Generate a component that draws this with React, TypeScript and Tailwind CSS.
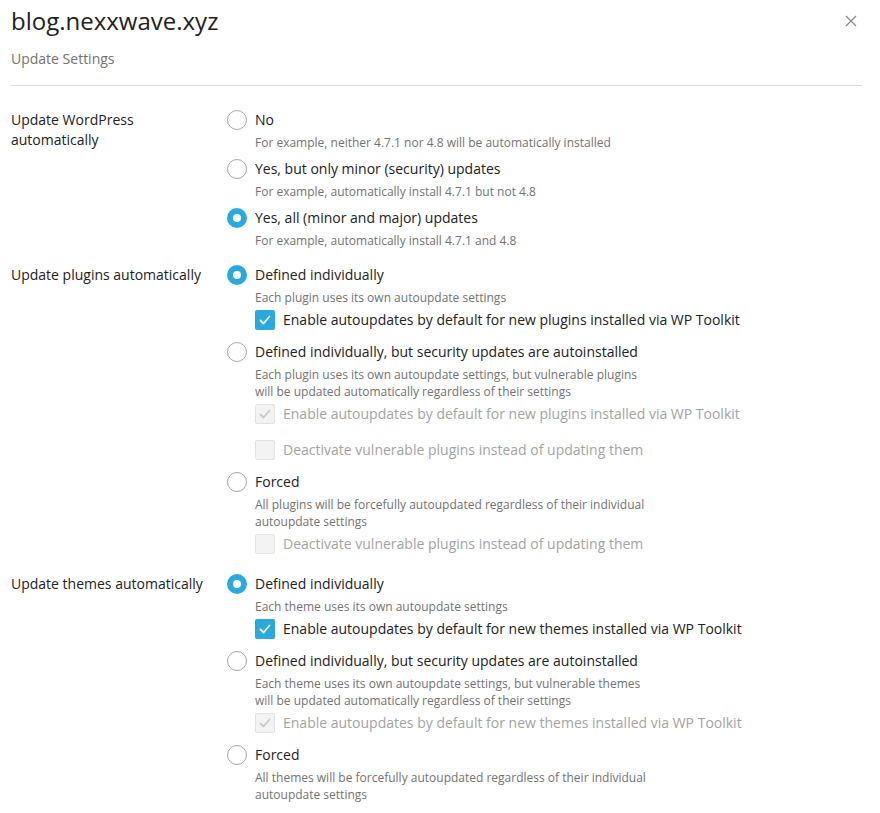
import React from 'react';

type Check = { label: string; checked?: boolean; disabled?: boolean; gap?: boolean };
type Option = { label: string; hint: string[]; selected?: boolean; checks?: Check[] };
type Group = { title: string[]; options: Option[] };

const groups: Group[] = [
    {
        title: ['Update WordPress', 'automatically'],
        options: [
            { label: 'No', hint: ['For example, neither 4.7.1 nor 4.8 will be automatically installed'] },
            { label: 'Yes, but only minor (security) updates', hint: ['For example, automatically install 4.7.1 but not 4.8'] },
            { label: 'Yes, all (minor and major) updates', hint: ['For example, automatically install 4.7.1 and 4.8'], selected: true },
        ],
    },
    {
        title: ['Update plugins automatically'],
        options: [
            {
                label: 'Defined individually',
                hint: ['Each plugin uses its own autoupdate settings'],
                selected: true,
                checks: [{ label: 'Enable autoupdates by default for new plugins installed via WP Toolkit', checked: true }],
            },
            {
                label: 'Defined individually, but security updates are autoinstalled',
                hint: ['Each plugin uses its own autoupdate settings, but vulnerable plugins', 'will be updated automatically regardless of their settings'],
                checks: [
                    { label: 'Enable autoupdates by default for new plugins installed via WP Toolkit', checked: true, disabled: true },
                    { label: 'Deactivate vulnerable plugins instead of updating them', disabled: true, gap: true },
                ],
            },
            {
                label: 'Forced',
                hint: ['All plugins will be forcefully autoupdated regardless of their individual', 'autoupdate settings'],
                checks: [{ label: 'Deactivate vulnerable plugins instead of updating them', disabled: true }],
            },
        ],
    },
    {
        title: ['Update themes automatically'],
        options: [
            {
                label: 'Defined individually',
                hint: ['Each theme uses its own autoupdate settings'],
                selected: true,
                checks: [{ label: 'Enable autoupdates by default for new themes installed via WP Toolkit', checked: true }],
            },
            {
                label: 'Defined individually, but security updates are autoinstalled',
                hint: ['Each theme uses its own autoupdate settings, but vulnerable themes', 'will be updated automatically regardless of their settings'],
                checks: [{ label: 'Enable autoupdates by default for new themes installed via WP Toolkit', checked: true, disabled: true }],
            },
            {
                label: 'Forced',
                hint: ['All themes will be forcefully autoupdated regardless of their individual', 'autoupdate settings'],
            },
        ],
    },
];

// ラジオボタン
const Radio: React.FC<{ selected?: boolean }> = ({ selected }) =>
    selected ? (
        <span className="w-5 h-5 rounded-full bg-[#28aade] flex items-center justify-center shrink-0">
            <span className="w-[8px] h-[8px] rounded-full bg-white" />
        </span>
    ) : (
        <span className="w-5 h-5 rounded-full border border-[#a6a6a6] bg-white shrink-0" />
    );

// チェックボックス
const CheckBox: React.FC<{ checked?: boolean; disabled?: boolean }> = ({ checked, disabled }) => (
    <span
        className={`w-5 h-5 rounded-[2px] flex items-center justify-center shrink-0 ${
            disabled ? 'bg-[#f3f3f3] border border-[#e2e2e2]' : 'bg-[#28aade]'
        }`}
    >
        {checked && (
            <svg width="14" height="14" viewBox="0 0 14 14" fill="none">
                <path
                    d="M2.5 7.5 L5.5 10.5 L11.5 3.5"
                    stroke={disabled ? '#c9c9c9' : '#ffffff'}
                    strokeWidth="1.8"
                    strokeLinecap="round"
                    strokeLinejoin="round"
                />
            </svg>
        )}
    </span>
);

const App: React.FC = () => {
    return (
        <div className="min-h-screen bg-white pl-[11px] pr-[18px] pt-[6px] text-[#222] font-['Open_Sans',sans-serif]">
            <div className="flex items-start justify-between">
                <h1 className="text-[24px] leading-[30px] text-[#222]">blog.nexxwave.xyz</h1>
                <button className="mt-[9px] mr-[5px] text-[#888]">
                    <svg width="12" height="12" viewBox="0 0 12 12">
                        <path d="M1 1 L11 11 M11 1 L1 11" stroke="#8a8a8a" strokeWidth="1.2" />
                    </svg>
                </button>
            </div>
            <p className="mt-[13px] text-[14px] leading-5 text-[#737373]">Update Settings</p>
            <div className="mt-[16px] border-t border-[#dcdce0]" />

            <div className="pt-[24px]">
                {groups.map((g, gi) => (
                    <div key={gi} className="grid grid-cols-[216px_1fr] pb-2">
                        <div className="text-[14px] leading-5 pr-4">
                            {g.title.map((t, i) => (
                                <div key={i}>{t}</div>
                            ))}
                        </div>
                        <div>
                            {g.options.map((o, oi) => (
                                <div key={oi} className={o.checks ? 'pb-3' : 'pb-2'}>
                                    <div className="flex items-center gap-2 h-5">
                                        <Radio selected={o.selected} />
                                        <span className="text-[14px] leading-5">{o.label}</span>
                                    </div>
                                    <div className="pl-[28px] mt-1 text-[12px] leading-[17px] text-[#737373]">
                                        {o.hint.map((h, i) => (
                                            <div key={i}>{h}</div>
                                        ))}
                                    </div>
                                    {o.checks?.map((c, ci) => (
                                        <div
                                            key={ci}
                                            className={`ml-[28px] flex items-center gap-2 h-5 ${c.gap ? 'mt-4' : 'mt-1'}`}
                                        >
                                            <CheckBox checked={c.checked} disabled={c.disabled} />
                                            <span className={`text-[14px] leading-5 ${c.disabled ? 'text-[#a3a3a3]' : ''}`}>
                                                {c.label}
                                            </span>
                                        </div>
                                    ))}
                                </div>
                            ))}
                        </div>
                    </div>
                ))}
            </div>
        </div>
    );
};

export default App;
